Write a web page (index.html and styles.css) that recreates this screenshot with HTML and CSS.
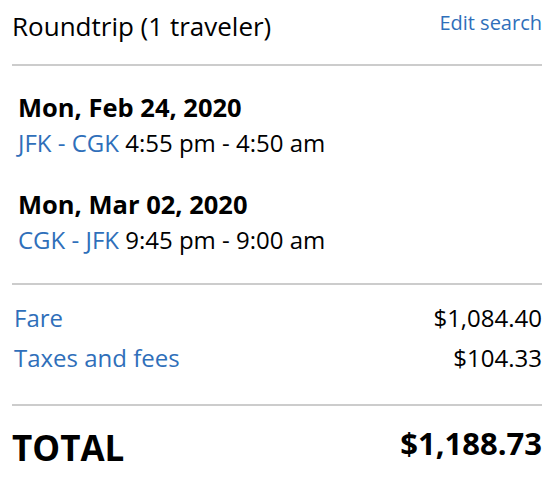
FILE: index.html
```html
<!DOCTYPE html>
<html lang="en">
<head>
    <meta charset="UTF-8">
    <meta name="viewport" content="width=device-width, initial-scale=1.0">
    <title>Trip Summary</title>
    <link rel="stylesheet" href="styles.css">
</head>
<body>
    <div class="summary">
        <div class="summary-header">
            <span class="trip-type">Roundtrip (1 traveler)</span>
            <a class="edit-link" href="#">Edit search</a>
        </div>

        <div class="flights">
            <div class="flight">
                <div class="flight-date">Mon, Feb 24, 2020</div>
                <div class="flight-info"><span class="route">JFK - CGK</span> 4:55 pm - 4:50 am</div>
            </div>
            <div class="flight">
                <div class="flight-date">Mon, Mar 02, 2020</div>
                <div class="flight-info"><span class="route">CGK - JFK</span> 9:45 pm - 9:00 am</div>
            </div>
        </div>

        <div class="prices">
            <div class="price-row">
                <span class="price-label">Fare</span>
                <span>$1,084.40</span>
            </div>
            <div class="price-row">
                <span class="price-label">Taxes and fees</span>
                <span>$104.33</span>
            </div>
        </div>

        <div class="total-row">
            <span class="total-label">TOTAL</span>
            <span class="total-amount">$1,188.73</span>
        </div>
    </div>
</body>
</html>
```

FILE: styles.css
```css
body {
    margin: 0;
    font-family: "Open Sans", Arial, sans-serif;
    color: #000;
    background: #fff;
}
.summary {
    padding: 0 14px 0 12px;
}
.summary-header {
    display: flex;
    justify-content: space-between;
    align-items: flex-start;
    padding-top: 8px;
    height: 56px;
    border-bottom: 2px solid #cccccc;
}
.trip-type {
    font-size: 26px;
    line-height: 36px;
}
.edit-link {
    font-size: 20px;
    line-height: 30px;
    color: #2f6fba;
    text-decoration: none;
}
.flights {
    padding: 23px 0 25px 6px;
    border-bottom: 2px solid #cccccc;
}
.flight + .flight {
    margin-top: 25px;
}
.flight-date {
    font-size: 25.5px;
    font-weight: 700;
    line-height: 36px;
}
.flight-info {
    font-size: 24px;
    line-height: 36px;
}
.route {
    color: #2f6fba;
}
.prices {
    padding: 13px 0 26px 2px;
    border-bottom: 2px solid #cccccc;
}
.price-row {
    display: flex;
    justify-content: space-between;
    font-size: 24px;
    line-height: 40px;
}
.price-label {
    color: #2f6fba;
}
.total-row {
    display: flex;
    justify-content: space-between;
    align-items: flex-start;
    padding-top: 18px;
    font-weight: 700;
}
.total-label {
    font-size: 35px;
    line-height: 48px;
}
.total-amount {
    font-size: 31px;
    line-height: 38px;
}
```
